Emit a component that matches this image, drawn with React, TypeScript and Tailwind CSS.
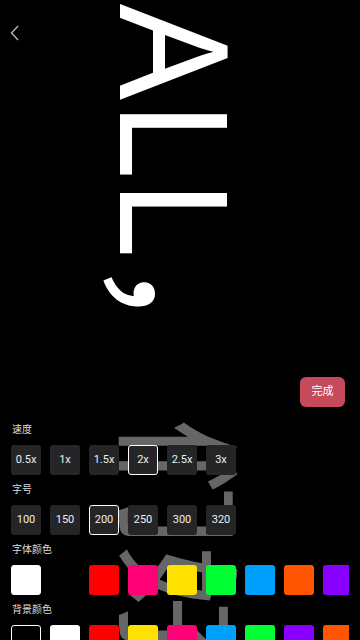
const speeds = ["0.5x", "1x", "1.5x", "2x", "2.5x", "3x"];
const sizes = ["100", "150", "200", "250", "300", "320"];
const fontColors = ["#ffffff", "#000000", "#ff0000", "#ff0077", "#ffe100", "#00ff33", "#00a0ff", "#ff5500", "#8800ff"];
const bgColors = ["#000000", "#ffffff", "#ff0000", "#ffe100", "#ff0077", "#00a0ff", "#00ff33", "#8800ff", "#ff5500"];

const Label = ({ children }: { children: string }) => (
  <div className="pl-[12px] h-5 leading-5 text-[10px] text-[#dddddd]">{children}</div>
);

const OptionRow = ({ items, active }: { items: string[]; active: string }) => (
  <div className="mt-[5px] mb-[5px] pl-[11px] flex gap-[9px]">
    {items.map((it) => (
      <div
        key={it}
        className={
          "w-[30px] h-[30px] shrink-0 rounded-[3px] bg-[#252528] flex items-center justify-center text-[11px] text-[#eeeeee] " +
          (it === active ? "border border-white" : "")
        }
      >
        {it}
      </div>
    ))}
  </div>
);

const SwatchRow = ({ colors, active }: { colors: string[]; active: number }) => (
  <div className="mt-[5px] mb-[5px] mx-[11px] flex gap-[9px] overflow-hidden">
    {colors.map((c, i) => (
      <div
        key={i}
        className={"w-[30px] h-[30px] shrink-0 rounded-[3px] " + (i === active ? "border border-white" : "")}
        style={{ backgroundColor: c }}
      />
    ))}
  </div>
);

export default function App() {
  return (
    <div className="relative w-[360px] h-[640px] overflow-hidden bg-black font-['Roboto','Noto_Sans_CJK_SC',sans-serif]">
      {/* scrolling text canvas */}
      <div className="absolute left-[253px] top-[4px] origin-top-left rotate-90 whitespace-nowrap text-[150px] leading-none text-white font-['Noto_Sans','Noto_Sans_CJK_SC',sans-serif]">
        ALL，
      </div>
      <div className="absolute left-[248px] top-[418px] origin-top-left rotate-90 whitespace-nowrap text-[128px] leading-none text-[#666666] font-['Noto_Sans_CJK_SC',sans-serif]">
        们好
      </div>

      <div className="relative flex flex-col">
        <div className="pt-[25px] pl-[10px]">
          <svg width="10" height="16" viewBox="0 0 10 16" fill="none">
            <path d="M8 1 L1.5 8 L8 15" stroke="#b5b5b5" strokeWidth="1.4" />
          </svg>
        </div>

        <div className="mt-[336px] flex justify-end pr-[15px]">
          <button className="w-[45px] h-[30px] rounded-[6px] bg-[#c44a5c] text-white text-[11px]">完成</button>
        </div>

        <div className="mt-[13px] flex flex-col">
          <Label>速度</Label>
          <OptionRow items={speeds} active="2x" />
          <Label>字号</Label>
          <OptionRow items={sizes} active="200" />
          <Label>字体颜色</Label>
          <SwatchRow colors={fontColors} active={0} />
          <Label>背景颜色</Label>
          <SwatchRow colors={bgColors} active={0} />
        </div>
      </div>
    </div>
  );
}
